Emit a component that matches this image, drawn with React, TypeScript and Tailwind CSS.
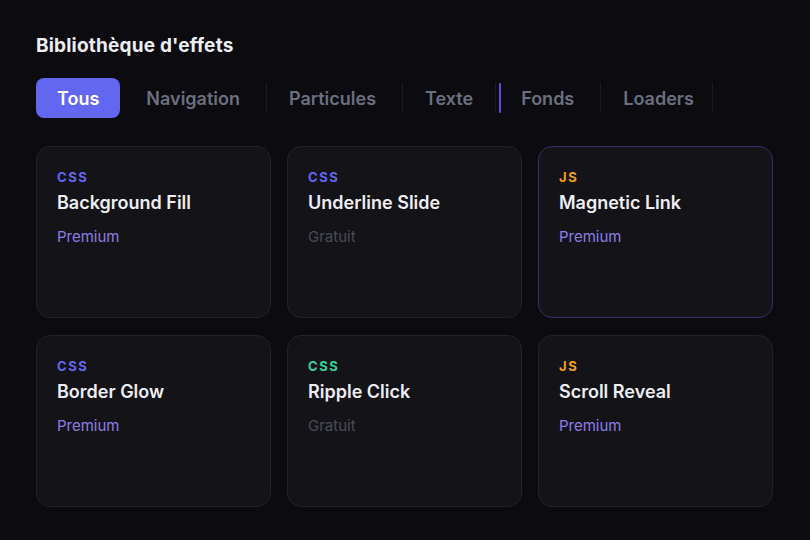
import { Fragment } from 'react';

type Effect = {
  kind: 'CSS' | 'JS';
  name: string;
  premium: boolean;
  tagClass: string;
  highlight?: boolean;
};

const tabs = ['Navigation', 'Particules', 'Texte', 'Fonds', 'Loaders'];

const effects: Effect[] = [
  { kind: 'CSS', name: 'Background Fill', premium: true, tagClass: 'text-[#6366f1]' },
  { kind: 'CSS', name: 'Underline Slide', premium: false, tagClass: 'text-[#6366f1]' },
  { kind: 'JS', name: 'Magnetic Link', premium: true, tagClass: 'text-[#f59e0b]', highlight: true },
  { kind: 'CSS', name: 'Border Glow', premium: true, tagClass: 'text-[#6366f1]' },
  { kind: 'CSS', name: 'Ripple Click', premium: false, tagClass: 'text-[#34d399]' },
  { kind: 'JS', name: 'Scroll Reveal', premium: true, tagClass: 'text-[#f59e0b]' },
];

function EffectCard({ effect }: { effect: Effect }) {
  return (
    <div
      className={`h-[172px] rounded-[14px] border bg-[#131318] px-5 pt-[22px] ${
        effect.highlight ? 'border-[#35306a]' : 'border-[#222229]'
      }`}
    >
      <div className={`text-[13px] leading-4 font-bold tracking-[0.12em] ${effect.tagClass}`}>
        {effect.kind}
      </div>
      <div className="mt-[7px] text-[18px] leading-[22px] font-semibold text-[#eeeef2]">
        {effect.name}
      </div>
      <div
        className={`mt-[13px] text-[15px] leading-5 ${
          effect.premium ? 'text-[#8f7ee6]' : 'text-[#4a4d57]'
        }`}
      >
        {effect.premium ? 'Premium' : 'Gratuit'}
      </div>
    </div>
  );
}

export default function App() {
  return (
    <div className="min-h-[540px] w-full bg-[#0b0b10] px-9 pt-[34px] font-['Inter','Noto_Sans',sans-serif]">
      <h1 className="text-[19px] leading-6 font-bold tracking-[0.01em] text-[#eeeef2]">
        Bibliothèque d'effets
      </h1>

      <div className="mt-[20px] flex items-center">
        <button className="mr-1 h-10 rounded-lg bg-[#6366f1] px-[21px] text-[18px] font-semibold text-white">
          Tous
        </button>
        {tabs.map((tab, i) => (
          <Fragment key={tab}>
            <button
              className={`h-10 text-[18px] font-semibold text-[#6b7080] ${
                i === 3 ? 'pl-[20px] pr-[22px]' : 'px-[22px]'
              }`}
            >
              {tab}
            </button>
            {tab === 'Texte' ? (
              <div className="flex h-[30px] items-center">
                <div className="h-full w-px bg-[#1c1c26]" />
                <div className="ml-[3px] h-full w-[2px] rounded-full bg-[#5b4fe0]" />
              </div>
            ) : (
              <div
                className={`h-[30px] w-px bg-[#1c1c26] ${i === tabs.length - 1 ? '-ml-1' : 'ml-1'}`}
              />
            )}
          </Fragment>
        ))}
      </div>

      <div className="mt-7 grid grid-cols-3 gap-x-4 gap-y-[17px] pr-[1px]">
        {effects.map((effect) => (
          <EffectCard key={effect.name} effect={effect} />
        ))}
      </div>
    </div>
  );
}
